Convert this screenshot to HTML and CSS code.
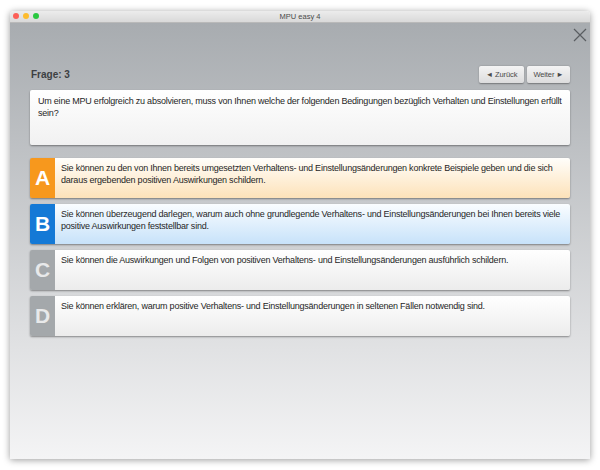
FILE: index.html
```html
<!DOCTYPE html>
<html lang="de">
<head>
<meta charset="utf-8">
<title>MPU easy 4</title>
<link rel="stylesheet" href="styles.css">
</head>
<body>
<div class="window">
  <div class="titlebar">
    <div class="lights">
      <span class="light red"></span>
      <span class="light yellow"></span>
      <span class="light green"></span>
    </div>
    <div class="title">MPU easy 4</div>
  </div>
  <div class="content">
    <div class="close-row">
      <svg class="close" width="14" height="14" viewBox="0 0 14 14"><path d="M1 1 L13 13 M13 1 L1 13" stroke="#5a5d61" stroke-width="1.2" fill="none"/></svg>
    </div>
    <div class="header">
      <div class="frage">Frage: 3</div>
      <div class="nav">
        <button class="btn">◄ Zurück</button>
        <button class="btn">Weiter ►</button>
      </div>
    </div>
    <div class="question">Um eine MPU erfolgreich zu absolvieren, muss von Ihnen welche der folgenden Bedingungen bezüglich Verhalten und Einstellungen erfüllt sein?</div>
    <div class="answers">
      <div class="answer a">
        <div class="letter">A</div>
        <div class="text">Sie können zu den von Ihnen bereits umgesetzten Verhaltens- und Einstellungsänderungen konkrete Beispiele geben und die sich daraus ergebenden positiven Auswirkungen schildern.</div>
      </div>
      <div class="answer b">
        <div class="letter">B</div>
        <div class="text">Sie können überzeugend darlegen, warum auch ohne grundlegende Verhaltens- und Einstellungsänderungen bei Ihnen bereits viele positive Auswirkungen feststellbar sind.</div>
      </div>
      <div class="answer c">
        <div class="letter">C</div>
        <div class="text">Sie können die Auswirkungen und Folgen von positiven Verhaltens- und Einstellungsänderungen ausführlich schildern.</div>
      </div>
      <div class="answer d">
        <div class="letter">D</div>
        <div class="text">Sie können erklären, warum positive Verhaltens- und Einstellungsänderungen in seltenen Fällen notwendig sind.</div>
      </div>
    </div>
  </div>
</div>
</body>
</html>
```

FILE: styles.css
```css
html, body {
  margin: 0;
  padding: 0;
  background: #ffffff;
}
body {
  padding: 11px 10px 11px 10px;
  font-family: "Liberation Sans", Arial, sans-serif;
}
.window {
  width: 580px;
  height: 448px;
  display: flex;
  flex-direction: column;
  box-shadow: 0 1px 7px rgba(0,0,0,0.4);
  border-radius: 4px 4px 0 0;
  overflow: hidden;
}
.titlebar {
  height: 11px;
  flex: none;
  background: linear-gradient(#ececec, #d9d9d9);
  border-bottom: 1px solid #b9b9b9;
  display: flex;
  align-items: center;
  justify-content: center;
  position: relative;
}
.lights {
  position: absolute;
  left: 3px;
  top: 2px;
  display: flex;
  gap: 4px;
}
.light {
  width: 6px;
  height: 6px;
  border-radius: 50%;
  display: block;
}
.red { background: #fc5f57; }
.yellow { background: #fdbc2e; }
.green { background: #2ac840; }
.title {
  font-size: 7.5px;
  color: #4a4a4a;
  line-height: 11px;
}
.content {
  flex: 1;
  background: linear-gradient(#a8acb0, #f4f4f5);
  padding: 5px 20px 0 20px;
  display: flex;
  flex-direction: column;
}
.close-row {
  display: flex;
  justify-content: flex-end;
  margin-right: -17px;
  height: 14px;
}
.header {
  margin-top: 24px;
  display: flex;
  justify-content: space-between;
  align-items: center;
  height: 17px;
}
.frage {
  font-size: 10px;
  font-weight: bold;
  color: #3d3f42;
  padding-left: 1px;
}
.nav {
  display: flex;
  gap: 3px;
}
.btn {
  font-family: "Liberation Sans", Arial, sans-serif;
  font-size: 7.5px;
  letter-spacing: -0.1px;
  white-space: nowrap;
  color: #4a4a4a;
  height: 17px;
  padding: 0;
  border: none;
  border-radius: 2px;
  background: linear-gradient(#f4f4f4, #dcdcdd);
  box-shadow: 0 0.5px 1.5px rgba(0,0,0,0.35);
}
.btn:first-child { width: 45px; }
.btn:last-child { width: 43px; }
.question {
  margin-top: 7px;
  height: 55px;
  box-sizing: border-box;
  padding: 5px 8px;
  background: linear-gradient(#ffffff, #f1f1f1);
  border-radius: 2px;
  box-shadow: 0 1px 2px rgba(0,0,0,0.4);
  font-size: 9px;
  letter-spacing: -0.22px;
  line-height: 12px;
  color: #262626;
}
.answers {
  margin-top: 13px;
  display: flex;
  flex-direction: column;
  gap: 6px;
}
.answer {
  height: 40px;
  display: flex;
  border-radius: 2px;
  overflow: hidden;
  box-shadow: 0 1px 2px rgba(0,0,0,0.4);
}
.letter {
  width: 25px;
  flex: none;
  display: flex;
  align-items: center;
  justify-content: center;
  color: #ffffff;
  font-weight: bold;
  font-size: 21px;
}
.text {
  flex: 1;
  padding: 4px 6px 0 6px;
  font-size: 9px;
  letter-spacing: -0.22px;
  line-height: 12px;
  color: #262626;
}
.a .letter { background: #f7981d; }
.a .text { background: linear-gradient(#fffefb, #fde2b9); }
.b .letter { background: #1479d6; }
.b .text { background: linear-gradient(#fafdff, #c7e2fa); }
.c .letter, .d .letter { background: #a4a8ab; color: #e8e9ea; }
.c .text, .d .text { background: linear-gradient(#ffffff, #ececec); }
```
